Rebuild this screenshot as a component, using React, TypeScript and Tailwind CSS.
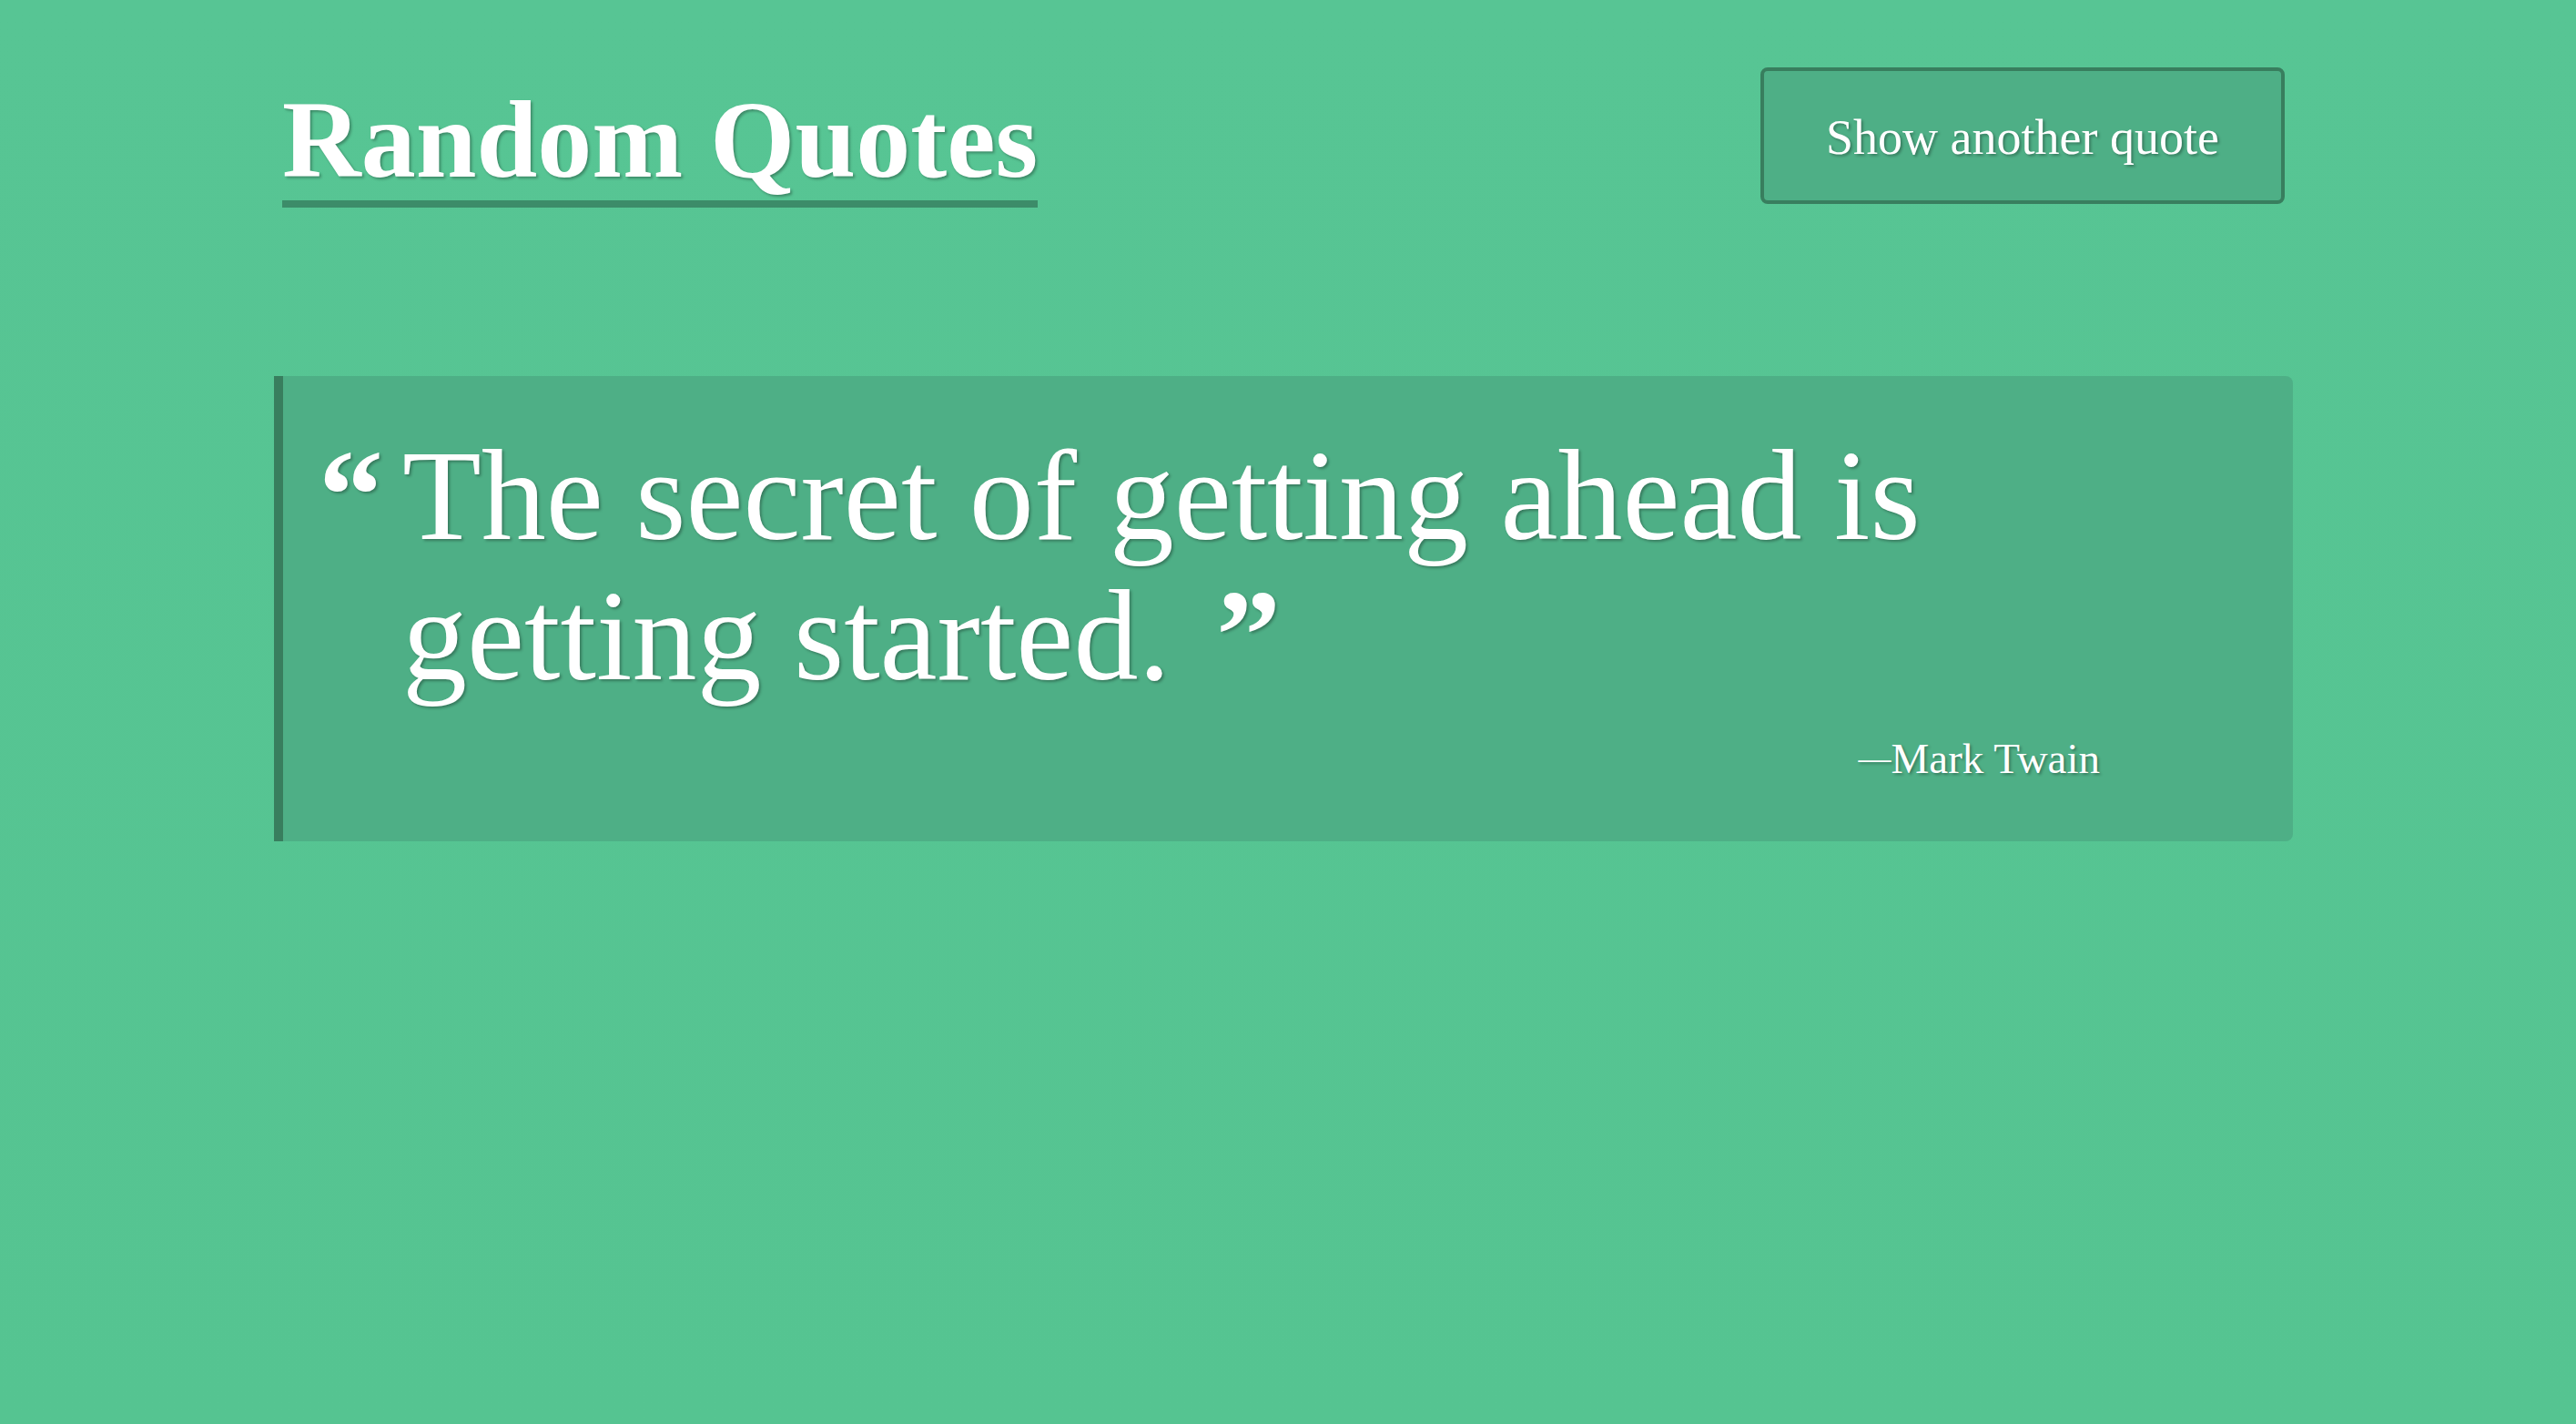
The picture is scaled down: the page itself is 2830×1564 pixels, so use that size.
import { useState } from "react";

type Quote = { text: string; author: string };

const QUOTES: Quote[] = [
  { text: "The secret of getting ahead is getting started.", author: "Mark Twain" },
  { text: "Well begun is half done.", author: "Aristotle" },
  { text: "Simplicity is the ultimate sophistication.", author: "Leonardo da Vinci" },
];

function QuoteCard({ quote }: { quote: Quote }) {
  return (
    <figure className="mt-[185px] rounded-r-lg border-l-[10px] border-[#387e5e] bg-[#4eaf86] pt-[54px] pr-[212px] pb-[61px] pl-[39px]">
      <blockquote className="flex text-[142px] leading-[154px]">
        <span className="w-[92px] shrink-0 font-bold">“</span>
        <p>
          {quote.text}
          <span className="ml-[50px] font-bold">”</span>
        </p>
      </blockquote>
      <figcaption className="mt-7 flex items-center justify-end text-[47px] leading-[60px]">
        <span className="text-[36px]">—</span>
        {quote.author}
      </figcaption>
    </figure>
  );
}

export default function App() {
  const [index, setIndex] = useState(0);

  return (
    <div className="min-h-screen bg-linear-to-b from-[#57c594] to-[#55c491] pt-[74px] pr-[10px] font-['Liberation_Serif',serif] text-white [text-shadow:2px_2px_3px_rgba(0,0,0,0.3)]">
      <main className="mx-auto max-w-[2218px]">
        <header className="flex items-start justify-between px-[9px]">
          <h1 className="mt-[14px] border-b-8 border-[#3c8c69] text-[120px] leading-[132px] font-bold">
            Random Quotes
          </h1>
          <button
            type="button"
            onClick={() => setIndex((index + 1) % QUOTES.length)}
            className="cursor-pointer rounded-lg border-4 border-[#387e5e] bg-[#4eaf86] px-[68px] pt-[41px] pb-[37px] text-[54px] leading-[64px] [text-shadow:2px_2px_3px_rgba(0,0,0,0.3)]"
          >
            Show another quote
          </button>
        </header>
        <QuoteCard quote={QUOTES[index]} />
      </main>
    </div>
  );
}
